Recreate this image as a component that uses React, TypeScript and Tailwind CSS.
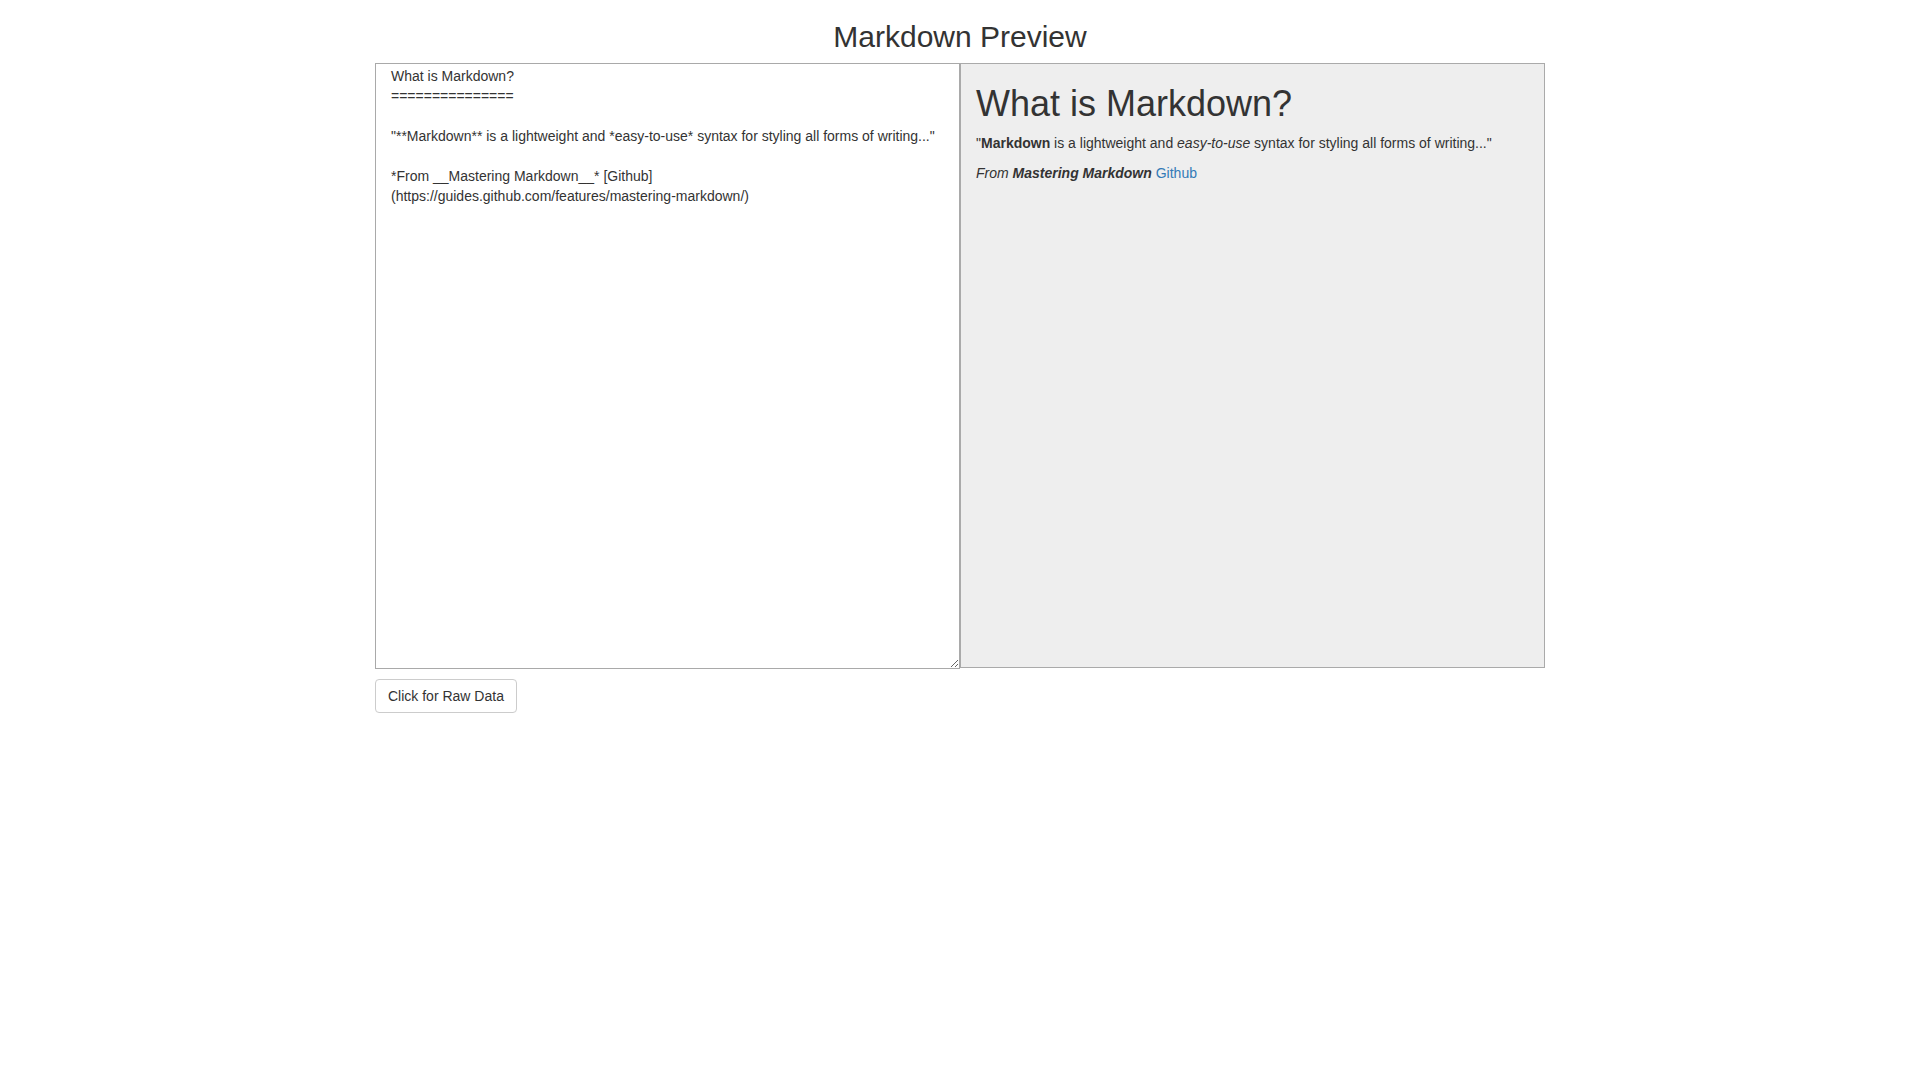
import { useState } from 'react'

// the link is kept on its own visual line, as the original textarea wraps it
const initialText = `What is Markdown?
===============

"**Markdown** is a lightweight and *easy-to-use* syntax for styling all forms of writing..."

*From __Mastering Markdown__* [Github]
(https://guides.github.com/features/mastering-markdown/)`

const App = () => {
  const [text, setText] = useState(initialText)

  return (
    <div className="min-h-screen w-full bg-white font-['Liberation_Sans',Arial,sans-serif] text-[14px] leading-[20px] text-[#333]">
      <div className="mx-auto w-[1170px]">
        <h2 className="mt-[20px] mb-[10px] text-center text-[30px] leading-[33px] font-normal text-[#333]">
          Markdown Preview
        </h2>
        <div className="flex items-start">
          <textarea
            className="block h-[606px] w-[585px] resize border border-[#a9a9a9] bg-white pt-[2px] pr-[14px] pl-[15px] text-[14px] leading-[20px] text-[#333] outline-none"
            value={text}
            onChange={(e) => setText(e.target.value)}
          />
          <div className="h-[605px] w-[585px] border border-[#aaa] bg-[#eee] px-[15px]">
            <h1 className="mt-[20px] mb-[10px] text-[36px] leading-[39px] font-normal text-[#333]">
              What is Markdown?
            </h1>
            <p className="mb-[10px]">
              "<strong className="font-bold">Markdown</strong> is a lightweight and{' '}
              <em className="italic">easy-to-use</em> syntax for styling all forms of writing..."
            </p>
            <p className="mb-[10px]">
              <em className="italic">
                From <strong className="font-bold">Mastering Markdown</strong>
              </em>{' '}
              <a className="text-[#337ab7]" href="#">
                Github
              </a>
            </p>
          </div>
        </div>
        <button className="mt-[10px] h-[34px] rounded-[4px] border border-[#ccc] bg-white px-[12px] text-[14px] leading-[20px] text-[#333]">
          Click for Raw Data
        </button>
      </div>
    </div>
  )
}

export default App
